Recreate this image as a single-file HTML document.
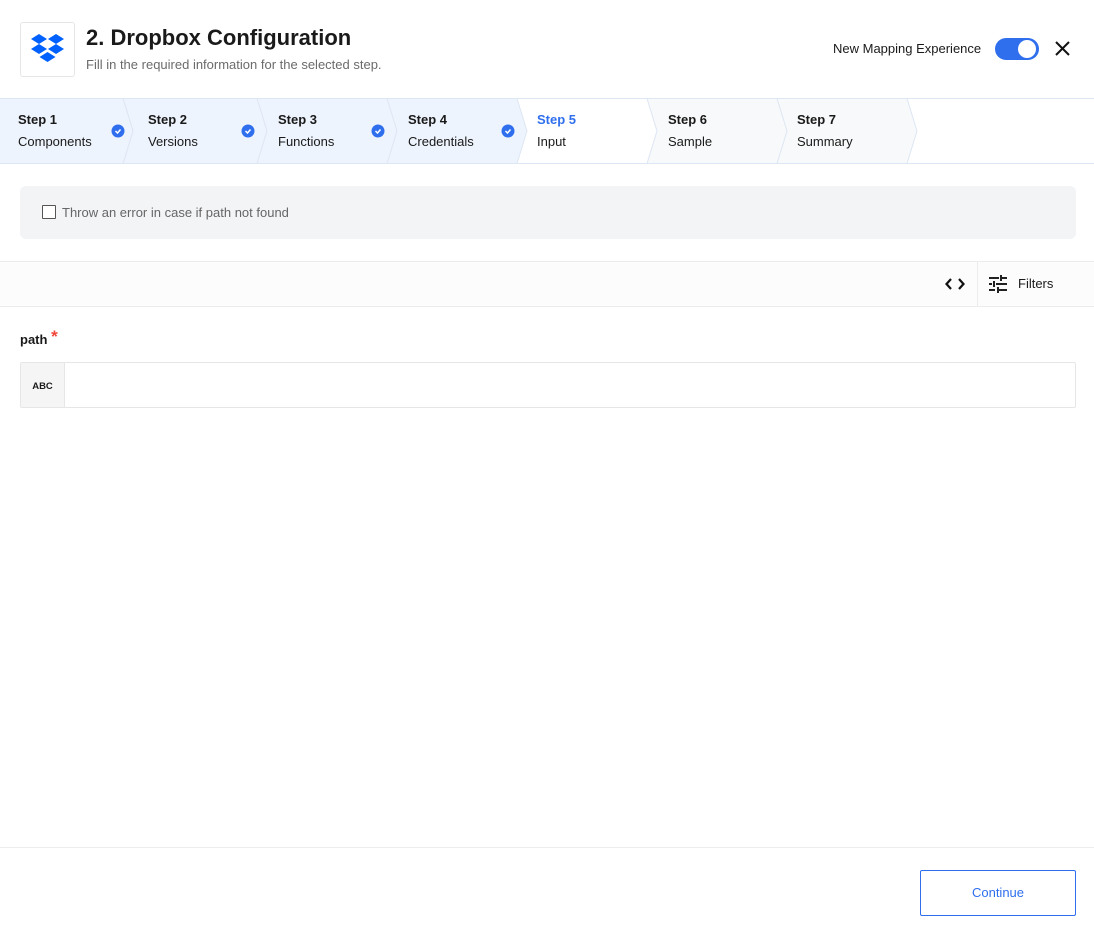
<!DOCTYPE html>
<html><head><meta charset="utf-8"><style>
*{box-sizing:border-box;margin:0;padding:0}
body{width:1094px;height:936px;background:#fff;font-family:"Liberation Sans",Arial,sans-serif;position:relative;overflow:hidden;color:#1a1a1a}
.abs{position:absolute}
</style></head><body>
<div class="abs" style="left:20px;top:22px;width:55px;height:55px;border:1px solid #e6e6e6;border-radius:3px"></div>
<svg class="abs" style="left:31px;top:34px" width="33" height="30" viewBox="0 0 33 30">
<g fill="#0061fe">
<polygon points="8,0 16,5 8,10 0,5"/>
<polygon points="25,0 33,5 25,10 17,5"/>
<polygon points="8,10 16,15 8,20 0,15"/>
<polygon points="25,10 33,15 25,20 17,15"/>
<polygon points="16.5,18 24.5,23 16.5,28 8.5,23"/>
</g></svg>
<div class="abs" style="left:86px;top:25px;font-size:22px;font-weight:bold;color:#1a1a1a">2. Dropbox Configuration</div>
<div class="abs" style="left:86px;top:57px;font-size:13px;color:#6b6b6b">Fill in the required information for the selected step.</div>
<div class="abs" style="left:833px;top:41px;font-size:13px;color:#1a1a1a">New Mapping Experience</div>
<div class="abs" style="left:995px;top:38px;width:44px;height:22px;border-radius:11px;background:#2f6fed"></div>
<div class="abs" style="left:1018px;top:40px;width:18px;height:18px;border-radius:50%;background:#fff"></div>
<svg class="abs" style="left:1054px;top:40px" width="17" height="17" viewBox="0 0 17 17"><path d="M2 2L15 15M15 2L2 15" stroke="#111" stroke-width="2"/></svg>

<div class="abs" style="left:0;top:98px;width:1094px;height:1px;background:#dde6f3"></div>
<div class="abs" style="left:0;top:163px;width:1094px;height:1px;background:#dde6f3"></div>
<svg class="abs" style="left:0;top:98px" width="1094" height="66" viewBox="0 0 1094 66">
<g stroke="#dde6f3" stroke-width="1">
<polygon points="773,0.5 907,0.5 917,33 907,65.5 773,65.5 783,33" fill="#f8f9fa"/>
<polygon points="643,0.5 777,0.5 787,33 777,65.5 643,65.5 653,33" fill="#f8f9fa"/>
<polygon points="513,0.5 647,0.5 657,33 647,65.5 513,65.5 523,33" fill="#fff"/>
<polygon points="383,0.5 517,0.5 527,33 517,65.5 383,65.5 393,33" fill="#eef4fd"/>
<polygon points="253,0.5 387,0.5 397,33 387,65.5 253,65.5 263,33" fill="#eef4fd"/>
<polygon points="123,0.5 257,0.5 267,33 257,65.5 123,65.5 133,33" fill="#eef4fd"/>
<polygon points="-1,0.5 123,0.5 133,33 123,65.5 -1,65.5" fill="#eef4fd"/>
</g>
<g fill="#2f6fed">
<circle cx="118" cy="33" r="6.5"/><circle cx="248" cy="33" r="6.5"/><circle cx="378" cy="33" r="6.5"/><circle cx="508" cy="33" r="6.5"/>
</g>
<g stroke="#fff" stroke-width="1.5" fill="none">
<path d="M115.5 33l2 2 3-3.5"/><path d="M245.5 33l2 2 3-3.5"/><path d="M375.5 33l2 2 3-3.5"/><path d="M505.5 33l2 2 3-3.5"/>
</g>
</svg>
<div class="abs" style="font-size:13px;line-height:16px;top:112px;left:18px"><b>Step 1</b><div style="margin-top:6px">Components</div></div>
<div class="abs" style="font-size:13px;line-height:16px;top:112px;left:148px"><b>Step 2</b><div style="margin-top:6px">Versions</div></div>
<div class="abs" style="font-size:13px;line-height:16px;top:112px;left:278px"><b>Step 3</b><div style="margin-top:6px">Functions</div></div>
<div class="abs" style="font-size:13px;line-height:16px;top:112px;left:408px"><b>Step 4</b><div style="margin-top:6px">Credentials</div></div>
<div class="abs" style="font-size:13px;line-height:16px;top:112px;left:537px"><b style="color:#2f6fed">Step 5</b><div style="margin-top:6px">Input</div></div>
<div class="abs" style="font-size:13px;line-height:16px;top:112px;left:668px"><b>Step 6</b><div style="margin-top:6px">Sample</div></div>
<div class="abs" style="font-size:13px;line-height:16px;top:112px;left:797px"><b>Step 7</b><div style="margin-top:6px">Summary</div></div>

<div class="abs" style="left:20px;top:186px;width:1056px;height:53px;background:#f3f4f6;border-radius:6px"></div>
<div class="abs" style="left:42px;top:205px;width:14px;height:14px;border:1.5px solid #555;background:#fff;border-radius:1px"></div>
<div class="abs" style="left:62px;top:205px;font-size:13px;color:#666">Throw an error in case if path not found</div>

<div class="abs" style="left:0;top:261px;width:1094px;height:46px;background:#fcfcfc;border-top:1px solid #ececec;border-bottom:1px solid #ececec"></div>
<div class="abs" style="left:977px;top:262px;width:1px;height:44px;background:#ececec"></div>
<svg class="abs" style="left:944px;top:276px" width="22" height="16" viewBox="0 0 22 16"><path d="M7 3L2.5 8L7 13M15 3L19.5 8L15 13" stroke="#111" stroke-width="2.2" fill="none"/></svg>
<svg class="abs" style="left:989px;top:275px" width="18" height="18" viewBox="0 0 18 18"><g fill="#222"><rect x="0" y="2" width="10" height="2"/><rect x="13" y="2" width="5" height="2"/><rect x="11" y="0" width="2" height="6"/><rect x="0" y="8" width="3" height="2"/><rect x="7" y="8" width="11" height="2"/><rect x="4" y="6" width="2" height="6"/><rect x="0" y="14" width="6" height="2"/><rect x="10" y="14" width="8" height="2"/><rect x="8" y="12" width="2" height="6"/></g></svg>
<div class="abs" style="left:1018px;top:276px;font-size:13px;color:#1a1a1a">Filters</div>

<div class="abs" style="left:20px;top:329px;font-size:13px;font-weight:bold">path <span style="color:#f0443a;font-size:17px;position:relative;top:-2px">*</span></div>
<div class="abs" style="left:20px;top:362px;width:1056px;height:46px;border:1px solid #e6e6e6;border-radius:2px"></div>
<div class="abs" style="left:21px;top:363px;width:44px;height:44px;background:#f5f5f5;border-right:1px solid #e6e6e6;font-size:9.5px;font-weight:bold;text-align:center;line-height:48px">ABC</div>

<div class="abs" style="left:0;top:847px;width:1094px;height:1px;background:#ececec"></div>
<div class="abs" style="left:920px;top:870px;width:156px;height:46px;border:1px solid #2f6fed;border-radius:2px;color:#2f6fed;font-size:13px;text-align:center;line-height:44px">Continue</div>
</body></html>
